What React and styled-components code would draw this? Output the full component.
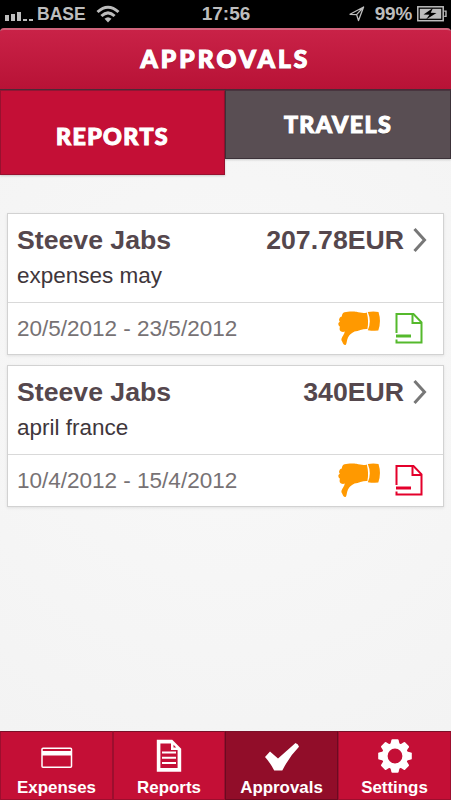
import React, { useState } from 'react';
import styled, { createGlobalStyle } from 'styled-components';

const GlobalStyle = createGlobalStyle`
  * {
    box-sizing: border-box;
  }
  body {
    margin: 0;
    background: #000;
    font-family: 'Liberation Sans', Arial, sans-serif;
  }
`;

const Screen = styled.div`
  display: flex;
  flex-direction: column;
  width: 451px;
  height: 800px;
  overflow: hidden;
  background: #000;
`;

const StatusBar = styled.div`
  display: grid;
  grid-template-columns: 1fr auto 1fr;
  align-items: center;
  height: 28px;
  padding: 0 4px 1px 5px;
  color: #bdbdbd;
  font-size: 19px;
  font-weight: bold;
  line-height: 26px;
`;

const StatusGroup = styled.div`
  display: flex;
  align-items: center;
  justify-content: ${(props) => (props.$end ? 'flex-end' : 'flex-start')};
`;

const Carrier = styled.span`
  margin: 0 10px 0 4px;
  font-size: 17.5px;
`;

const Percent = styled.span`
  margin: 0 5px 0 10px;
  font-size: 18.9px;
  letter-spacing: -0.2px;
`;

const TitleBar = styled.header`
  display: flex;
  align-items: center;
  justify-content: center;
  height: 62px;
  flex: none;
  padding-bottom: 2px;
  border-top: 2px solid #d0647c;
  border-bottom: 1px solid #4a2c38;
  border-radius: 4px 4px 0 0;
  background: linear-gradient(#c92247, #b81236);
`;

const Title = styled.h1`
  margin: 0;
  color: #fff;
  font-family: Lato, 'Open Sans', sans-serif;
  font-size: 24.5px;
  font-weight: 900;
  letter-spacing: 3.1px;
  line-height: 30px;
  text-shadow: 0 1px 1px rgba(80, 0, 20, 0.5);
  -webkit-text-stroke: 1.2px #fff;
`;

const Content = styled.main`
  display: flex;
  flex-direction: column;
  flex: 1;
  background: radial-gradient(circle at 50% 45%, #f7f7f7 30%, #f3f3f3 100%);
`;

const Tabs = styled.div`
  display: flex;
  align-items: flex-start;
  height: 85px;
`;

const Tab = styled.button`
  display: flex;
  align-items: center;
  justify-content: center;
  width: ${(props) => (props.$active ? 225 : 226)}px;
  height: ${(props) => (props.$active ? 85 : 69)}px;
  padding: ${(props) => (props.$active ? '7px 0 0' : '0 0 2px')};
  border: 1px solid ${(props) => (props.$active ? '#98112f' : '#3c3239')};
  border-top-color: ${(props) => (props.$active ? '#8e1734' : '#49353f')};
  background: ${(props) => (props.$active ? '#c40f36' : '#594e53')};
  box-shadow: 0 1px 2px rgba(0, 0, 0, 0.18);
  color: #fff;
  font-family: Lato, 'Open Sans', sans-serif;
  font-size: 23.2px;
  font-weight: 900;
  letter-spacing: 1.4px;
  line-height: 30px;
  text-shadow: ${(props) => (props.$active ? 'none' : '0 1px 1px rgba(0, 0, 0, 0.4)')};
  -webkit-text-stroke: 1.1px #fff;
  cursor: pointer;
`;

const List = styled.div`
  display: flex;
  flex-direction: column;
  gap: 10px;
  padding: 38px 7px 0;
`;

const Card = styled.article`
  height: 142px;
  border: 1px solid #d2d2d2;
  background: #fff;
  box-shadow: 0 1px 3px rgba(0, 0, 0, 0.09);
`;

const CardTop = styled.div`
  height: 89px;
  padding: 10px 16px 0 9px;
  border-bottom: 1px solid #d9d9d9;
`;

const CardHeading = styled.div`
  display: flex;
  align-items: center;
  height: 32px;
  color: #55474d;
  font-size: 26.67px;
  font-weight: bold;
  line-height: 32px;
`;

const Amount = styled.span`
  margin-left: auto;
  margin-right: 9px;
`;

const Description = styled.div`
  margin-top: 6px;
  color: #40363b;
  font-size: 22.5px;
  line-height: 28px;
`;

const CardBottom = styled.div`
  display: flex;
  align-items: center;
  height: 51px;
  padding: 0 20px 0 9px;
  color: #777274;
  font-size: 22.5px;
  line-height: 30px;
`;

const CardIcons = styled.div`
  display: flex;
  align-items: center;
  gap: 14px;
  margin-left: auto;
`;

const BottomBar = styled.nav`
  display: grid;
  grid-template-columns: 113px 112px 113px 113px;
  height: 69px;
  flex: none;
`;

const BarItem = styled.button`
  display: flex;
  flex-direction: column;
  align-items: center;
  justify-content: flex-end;
  padding: 0;
  border: 1px solid ${(props) => (props.$active ? '#6c0a21' : '#9d0e2e')};
  border-top-color: #7a1028;
  background: ${(props) => (props.$active ? '#910d29' : '#c40f36')};
  color: #fff;
  font-family: inherit;
  font-size: 16.9px;
  font-weight: bold;
  line-height: 22px;
  cursor: pointer;
`;

const IconSlot = styled.span`
  display: flex;
  align-items: center;
  justify-content: center;
  height: 38px;
  margin-bottom: 2px;
  padding-top: ${(props) => props.$drop || 0}px;
`;

const SignalIcon = () => (
  <svg width="28" height="14" fill="#bdbdbd">
    <rect x="0" y="8" width="4" height="6" />
    <rect x="6" y="7" width="4" height="7" />
    <rect x="12" y="5" width="4" height="9" />
    <rect x="18" y="12" width="4" height="2" />
    <rect x="24" y="12" width="4" height="2" />
  </svg>
);

const WifiIcon = () => (
  <svg width="24" height="18" fill="none" stroke="#bdbdbd" strokeWidth="3">
    <path d="M1.5 7 Q12 -2.5 22.5 7" />
    <path d="M5.4 11 Q12 4.8 18.6 11" />
    <path d="M8.5 13.8 Q12 10.7 15.5 13.8 L12 17.5 Z" fill="#bdbdbd" stroke="none" />
  </svg>
);

const LocationIcon = () => (
  <svg width="16" height="16" fill="none" stroke="#bdbdbd" strokeWidth="1.3">
    <path d="M14.6 1 L1 8.3 L7.6 8.6 L9.5 14.6 Z M14.6 1 L7.6 8.6" strokeLinejoin="round" />
  </svg>
);

const BatteryIcon = () => (
  <svg width="30" height="16">
    <rect x="0.8" y="0.8" width="25.4" height="13.9" fill="none" stroke="#bdbdbd" strokeWidth="1.5" />
    <rect x="2.8" y="2.8" width="21.4" height="9.9" fill="#bdbdbd" />
    <path d="M27.2 5.1 H29 V10.4 H27.2" fill="none" stroke="#bdbdbd" strokeWidth="1.4" />
    <path d="M16 2 L6.5 8.5 L12.5 8.7 L9 13.5 L19.5 7 L13.7 6.8 Z" fill="#000" />
  </svg>
);

const ChevronIcon = () => (
  <svg width="14" height="26" fill="none" stroke="#777" strokeWidth="3">
    <path d="M1.5 2 L11.5 13 L1.5 24" />
  </svg>
);

const ThumbDownIcon = () => (
  <svg width="43" height="35" fill="#ff9900">
    <path d="M6.5 1.2 C10 .2 16 .2 18.5 .8 C22 1.6 26 2.6 28.8 1.4 Q31 10 29.4 18 C25 17.6 21 19.8 16.5 20.6 C13.5 22 11.5 24 10 26.5 C8.8 29 8.8 32 8 33.6 C7 34.8 5.2 33.8 4.6 31.6 C4.4 30.4 3.2 29.8 3.4 28 C4.3 25.5 6.4 23.5 6.8 20.6 C4.5 21.4 1.8 20.5 1.6 18.2 Q1.6 17 1.9 15.8 Q0 14.6 .3 12.6 Q.7 11.5 1.8 10.8 Q.3 9 1.6 7 Q2.3 5.8 3.8 5.6 Q4 2 6.5 1.2 Z" />
    <path d="M29.8 1 Q35.5 .2 40.5 1 Q43.5 10.5 40.3 19.6 Q35 20 29.8 19.2 Q33.8 10.5 29.8 1 Z" />
  </svg>
);

const DocumentIcon = ({ color }) => (
  <svg width="28" height="34" fill="none" stroke={color} strokeWidth="2">
    <path d="M1.5 21 V2 H18.5 L26.5 10.3 V30.5 H1.5 V27.5" />
    <path d="M17.5 2 V11 H26.5" />
    <path d="M1 24 H16" strokeWidth="3" />
  </svg>
);

const CardPaymentIcon = () => (
  <svg width="32" height="22">
    <rect x="1" y="1.2" width="29.5" height="19" rx="1" fill="none" stroke="#fff" strokeWidth="1.5" />
    <rect x="1" y="4" width="29.5" height="4.5" fill="#fff" />
  </svg>
);

const ReportIcon = () => (
  <svg width="26" height="34">
    <path d="M2.6 2.6 H15.5 L23.4 10.5 V30.9 H2.6 Z" fill="#c40f36" stroke="#fff" strokeWidth="3.6" />
    <path d="M15 2 V11 H24 Z" fill="#fff" />
    <path d="M17.5 5.8 V8.5 H20.2 Z" fill="#c40f36" />
    <path d="M6 13.5 H20 M6 18.8 H20 M6 24 H20" stroke="#fff" strokeWidth="2" />
  </svg>
);

const CheckIcon = () => (
  <svg width="36" height="30">
    <path d="M1 15 L6 9.5 L14 16.5 L31.5 1 Q34.5 2 35 4.8 Q25 15 18.3 28.6 H10.2 Q6.5 21 1 15 Z" fill="#fff" />
  </svg>
);

// eight rounded teeth around a ring
const GearIcon = () => (
  <svg width="34" height="34" viewBox="-17 -17 34 34">
    {[0, 45, 90, 135, 180, 225, 270, 315].map((angle) => (
      <path
        key={angle}
        d="M-5 -10 L-3.6 -16 Q-3.4 -16.8 -2.6 -16.8 H2.6 Q3.4 -16.8 3.6 -16 L5 -10 Z"
        transform={`rotate(${angle})`}
        fill="#fff"
      />
    ))}
    <circle r="10.3" fill="none" stroke="#fff" strokeWidth="5.8" />
  </svg>
);

const reports = [
  {
    id: 1,
    name: 'Steeve Jabs',
    amount: '207.78EUR',
    description: 'expenses may',
    dates: '20/5/2012 - 23/5/2012',
    color: '#55b92c',
  },
  {
    id: 2,
    name: 'Steeve Jabs',
    amount: '340EUR',
    description: 'april france',
    dates: '10/4/2012 - 15/4/2012',
    color: '#e4002b',
  },
];

const menu = [
  { label: 'Expenses', Icon: CardPaymentIcon, drop: 3 },
  { label: 'Reports', Icon: ReportIcon },
  { label: 'Approvals', Icon: CheckIcon, drop: 1 },
  { label: 'Settings', Icon: GearIcon },
];

const ReportCard = ({ report }) => (
  <Card>
    <CardTop>
      <CardHeading>
        <span>{report.name}</span>
        <Amount>{report.amount}</Amount>
        <ChevronIcon />
      </CardHeading>
      <Description>{report.description}</Description>
    </CardTop>
    <CardBottom>
      <span>{report.dates}</span>
      <CardIcons>
        <ThumbDownIcon />
        <DocumentIcon color={report.color} />
      </CardIcons>
    </CardBottom>
  </Card>
);

function App() {
  const [tab, setTab] = useState('REPORTS');
  const [section, setSection] = useState('Approvals');

  return (
    <Screen>
      <GlobalStyle />
      <StatusBar>
        <StatusGroup>
          <SignalIcon />
          <Carrier>BASE</Carrier>
          <WifiIcon />
        </StatusGroup>
        <span>17:56</span>
        <StatusGroup $end>
          <LocationIcon />
          <Percent>99%</Percent>
          <BatteryIcon />
        </StatusGroup>
      </StatusBar>
      <TitleBar>
        <Title>APPROVALS</Title>
      </TitleBar>
      <Content>
        <Tabs>
          {['REPORTS', 'TRAVELS'].map((name) => (
            <Tab key={name} $active={tab === name} onClick={() => setTab(name)}>
              {name}
            </Tab>
          ))}
        </Tabs>
        <List>
          {reports.map((report) => (
            <ReportCard key={report.id} report={report} />
          ))}
        </List>
      </Content>
      <BottomBar>
        {menu.map(({ label, Icon, drop }) => (
          <BarItem key={label} $active={section === label} onClick={() => setSection(label)}>
            <IconSlot $drop={drop}>
              <Icon />
            </IconSlot>
            {label}
          </BarItem>
        ))}
      </BottomBar>
    </Screen>
  );
}

export default App;
